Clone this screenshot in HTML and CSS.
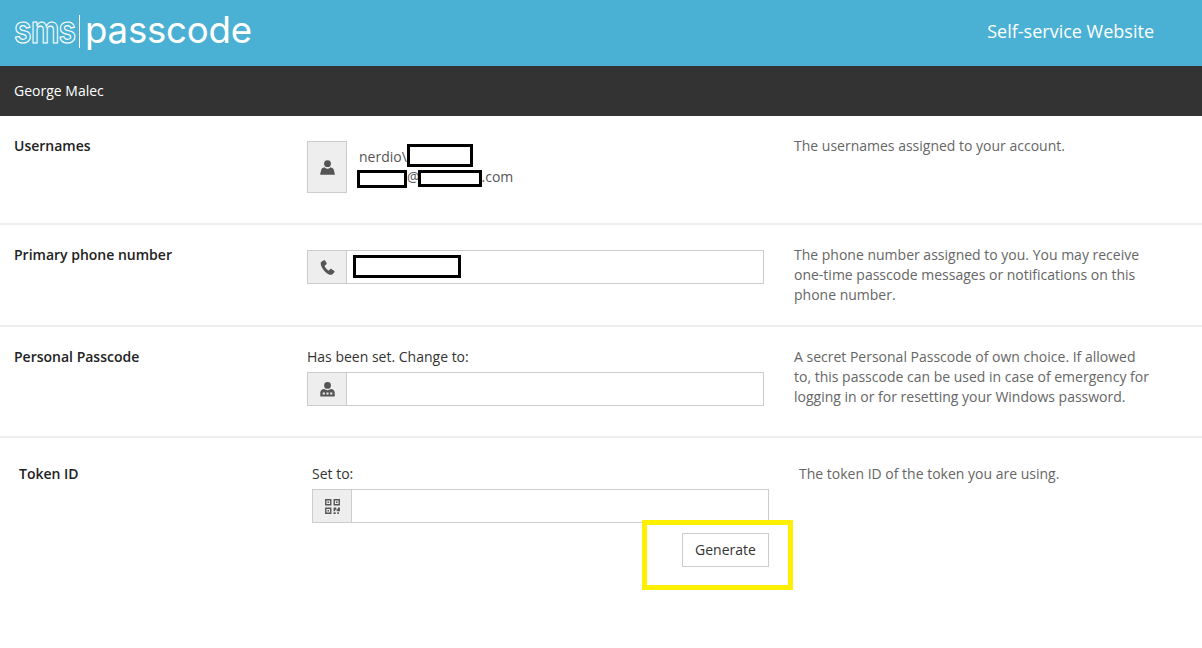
FILE: index.html
```html
<!DOCTYPE html>
<html lang="en">
<head>
<meta charset="utf-8">
<title>SMS Passcode Self-service Website</title>
<link rel="stylesheet" href="styles.css">
</head>
<body>
<header class="top">
  <div class="logo">
    <span class="logo-sms">sms</span>
    <span class="logo-rule"></span>
    <span class="logo-name">passcode</span>
  </div>
  <div class="site-title">Self-service Website</div>
</header>
<div class="userbar">George Malec</div>
<main>
  <section class="row row-user">
    <div class="label">Usernames</div>
    <div class="control user-control">
      <span class="addon addon-tall">
        <svg class="icon" viewBox="0 0 16 16"><circle cx="8" cy="4.400" r="3.200"/><path d="M1 14.800 2 10.500C2.300 9 3.500 8.200 5.200 7.800 5.900 8.700 6.900 9.200 8 9.200s2.100-.5 2.800-1.400c1.700.4 2.900 1.200 3.200 2.700l1 4.300z"/></svg>
      </span>
      <div class="names">
        <div class="name-line">nerdio\<span class="redact r-a"></span></div>
        <div class="name-line name-two"><span class="redact r-b"></span>@<span class="redact r-c"></span>.com</div>
      </div>
    </div>
    <p class="desc">The usernames assigned to your account.</p>
  </section>
  <section class="row row-phone">
    <div class="label">Primary phone number</div>
    <div class="control control-offset">
      <div class="field">
        <span class="addon">
          <svg class="icon" viewBox="0 0 16 16"><path d="M4.600 1.200 2.300 2.600C1.300 3.300 1.400 5 2.400 7.200c1.400 3 3.700 5.600 6.100 6.900 1.900 1 3.400 1.100 4.200.3l1.800-1.900c.3-.4.300-.8-.1-1.100l-2.700-2c-.4-.3-.8-.2-1.100.1l-1 1.100c-.3.300-.6.300-1 .1-1.400-.9-2.500-2.300-3.200-3.900-.1-.4-.1-.7.300-.9l1.200-.8c.4-.3.500-.7.300-1.100L5.700 1.500c-.3-.5-.7-.5-1.100-.3z"/></svg>
        </span>
        <span class="input"><span class="redact r-d"></span></span>
      </div>
    </div>
    <p class="desc">The phone number assigned to you. You may receive one-time passcode messages or notifications on this phone number.</p>
  </section>
  <section class="row row-pass">
    <div class="label">Personal Passcode</div>
    <div class="control">
      <div class="caption">Has been set. Change to:</div>
      <div class="field">
        <span class="addon">
          <svg class="icon" viewBox="0 0 16 16"><circle cx="8" cy="4.200" r="3.200"/><path d="M1.200 14.500v-3.500c0-2 1.600-3.200 3.800-3.400.8.700 1.900 1.100 3 1.100s2.200-.4 3-1.100c2.200.2 3.800 1.400 3.800 3.400v3.500z"/><path class="cut" d="M3.500 10.800h2v1.800h-2zM7 10.800h2v1.800H7zM10.500 10.800h2v1.800h-2z"/></svg>
        </span>
        <input class="input" type="text" aria-label="Personal Passcode">
      </div>
    </div>
    <p class="desc">A secret Personal Passcode of own choice. If allowed to, this passcode can be used in case of emergency for logging in or for resetting your Windows password.</p>
  </section>
  <section class="row row-token">
    <div class="label">Token ID</div>
    <div class="control">
      <div class="caption">Set to:</div>
      <div class="field">
        <span class="addon">
          <svg class="icon" viewBox="0 0 16 16"><path fill-rule="evenodd" d="M1 1h6v6H1zm1.300 1.300v3.400h3.400V2.300zM9 1h6v6H9zm1.300 1.300v3.400h3.400V2.300zM1 9h6v6H1zm1.300 1.300v3.400h3.400v-3.400zM3.300 3.300h1.400v1.400H3.300zM11.300 3.300h1.400v1.400h-1.400zM3.300 11.300h1.400v1.400H3.300zM9 9h2.500v1.500H13V9h2v3.500h-3V11h-1.500v1.500H9zM9 13.500h2V15H9zM12.500 13.500H14V15h-1.500z"/></svg>
        </span>
        <input class="input" type="text" aria-label="Token ID">
      </div>
      <div class="actions"><button class="btn" type="button">Generate</button></div>
    </div>
    <p class="desc">The token ID of the token you are using.</p>
    <div class="highlight"></div>
  </section>
</main>
</body>
</html>
```

FILE: styles.css
```css
* { box-sizing: border-box; }
html, body { margin: 0; padding: 0; }
body {
  height: 648px;
  overflow: hidden;
  background: #fff;
  color: #333;
  font-family: "Open Sans", "Liberation Sans", sans-serif;
  font-size: 14px;
  line-height: 20px;
}
.top {
  height: 66px;
  background: #4ab1d4;
  color: #fff;
  display: flex;
  align-items: center;
  justify-content: space-between;
  padding: 0 48px 0 14px;
}
.logo { display: flex; align-items: center; height: 34px; margin-top: -3px; }
.logo-sms {
  font-family: "Inter", sans-serif;
  font-size: 38px;
  font-weight: 600;
  line-height: 34px;
  letter-spacing: -1px;
  width: 60px;
  color: transparent;
  -webkit-text-stroke: 1.2px #fff;
  transform: scaleX(0.84);
  transform-origin: left center;
  margin-top: -6px;
}
.logo-rule { width: 1px; height: 33px; background: #fff; margin: 0 5px; }
.logo-name {
  font-family: "Inter", sans-serif;
  font-size: 36.6px;
  font-weight: 400;
  line-height: 34px;
  letter-spacing: -0.2px;
  margin-top: -4px;
}
.site-title { font-size: 18px; margin-top: -4px; }
.userbar {
  height: 50px;
  background: #333;
  color: #fff;
  padding: 15px 14px;
}
.row {
  position: relative;
  display: grid;
  grid-template-columns: 293px 457px 1fr;
  padding-left: 14px;
  border-bottom: 2px solid #eee;
}
.row-user { height: 109px; padding-top: 20px; }
.row-phone { height: 102px; padding-top: 20px; }
.row-pass { height: 111px; padding-top: 20px; }
.row-token { border-bottom: 0; padding: 26px 0 0 19px; }
.label { font-weight: 600; color: #222; }
.control { min-width: 0; }
.control-offset { margin-top: 5px; }
.desc {
  margin: 0 0 0 30px;
  width: 358px;
  color: #666;
}
.user-control { display: flex; margin-top: 5px; }
.addon {
  width: 39px;
  height: 32px;
  flex: none;
  display: flex;
  align-items: center;
  justify-content: center;
  background: #eee;
  border-right: 1px solid #ccc;
}
.addon-tall {
  width: 40px;
  height: 52px;
  border: 1px solid #ccc;
}
.icon { width: 17px; height: 17px; fill: #555; }
.icon .cut { fill: #eee; }
.names { padding: 6px 0 0 12px; color: #555; }
.name-line { height: 20px; display: flex; align-items: flex-start; }
.name-two { margin-left: -2px; }
.field {
  display: flex;
  height: 34px;
  border: 1px solid #ccc;
}
.input {
  display: block;
  flex: 1;
  min-width: 0;
  height: 32px;
  border: 0;
  padding: 4px 6px;
  outline: 0;
  background: #fff;
}
.redact {
  display: inline-block;
  flex: none;
  background: #fff;
  border: 3px solid #000;
}
.r-a { width: 66px; height: 23px; margin-top: -3px; }
.r-b { width: 50px; height: 18px; margin-top: 3px; }
.r-c { width: 64px; height: 17px; margin: 3px 0 0 -2px; }
.r-d { width: 108px; height: 23px; }
.caption { height: 25px; }
.actions { display: flex; justify-content: flex-end; margin-top: 10px; }
.btn {
  width: 87px;
  height: 34px;
  border: 1px solid #ccc;
  background: #fff;
  color: #333;
  font: inherit;
  padding: 0;
}
.highlight {
  position: absolute;
  left: 642px;
  top: 82px;
  width: 151px;
  height: 70px;
  border: 5px solid #ffef00;
  pointer-events: none;
}
```
